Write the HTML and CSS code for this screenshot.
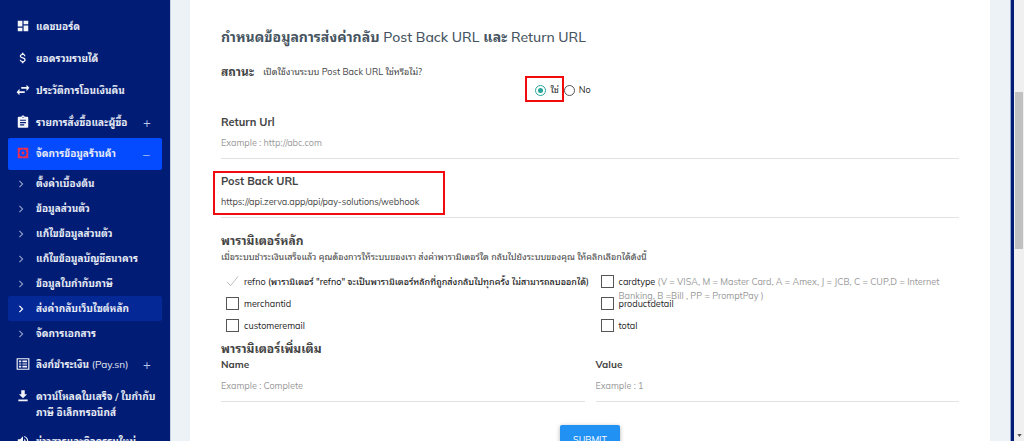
FILE: index.html
```html
<!DOCTYPE html>
<html lang="th">
<head>
<meta charset="utf-8">
<meta name="viewport" content="width=device-width, initial-scale=1">
<title>Post Back URL</title>
<link rel="stylesheet" href="styles.css">
</head>
<body>
<div class="app">
  <nav class="sidebar">
    <ul class="menu">
      <li><a class="item" href="#"><svg class="icon" viewBox="0 0 24 24"><path d="M3 13h8V3H3v10zm0 8h8v-6H3v6zm10 0h8V11h-8v10zm0-18v6h8V3h-8z"/></svg><span class="label">แดชบอร์ด</span></a></li>
      <li><a class="item" href="#"><svg class="icon" viewBox="0 0 24 24"><path d="M11.8 10.9c-2.27-.59-3-1.2-3-2.15 0-1.09 1.01-1.85 2.7-1.85 1.78 0 2.44.85 2.5 2.1h2.21c-.07-1.72-1.12-3.3-3.21-3.81V3h-3v2.16c-1.94.42-3.5 1.68-3.5 3.61 0 2.31 1.91 3.46 4.7 4.13 2.5.6 3 1.48 3 2.41 0 .69-.49 1.79-2.7 1.79-2.06 0-2.87-.92-2.98-2.1h-2.2c.12 2.19 1.76 3.42 3.68 3.83V21h3v-2.15c1.95-.37 3.5-1.5 3.5-3.55 0-2.84-2.43-3.81-4.7-4.4z"/></svg><span class="label">ยอดรวมรายได้</span></a></li>
      <li><a class="item" href="#"><svg class="icon" viewBox="0 0 24 24"><path d="M23 8l-5-5v4H9v3h9v4l5-6zM1 16l5 5v-4h9v-3H6v-4l-5 6z"/></svg><span class="label">ประวัติการโอนเงินคืน</span></a></li>
      <li><a class="item" href="#"><svg class="icon" viewBox="0 0 24 24"><path d="M19 3h-4.18C14.4 1.84 13.3 1 12 1c-1.3 0-2.4.84-2.82 2H5c-1.1 0-2 .9-2 2v15c0 1.1.9 2 2 2h14c1.1 0 2-.9 2-2V5c0-1.1-.9-2-2-2zm-7 0c.55 0 1 .45 1 1s-.45 1-1 1-1-.45-1-1 .45-1 1-1zm2 15H7v-2h7v2zm3-4H7v-2h10v2zm0-4H7V8h10v2z"/></svg><span class="label">รายการสั่งซื้อและผู้ซื้อ</span><span class="toggle">+</span></a></li>
      <li>
        <a class="item item-open" href="#"><svg class="icon icon-alert" viewBox="0 0 24 24"><path fill-rule="evenodd" d="M3 3h18v18H3zM12 5l2 2h3v3l2 2-2 2v3h-3l-2 2-2-2H7v-3l-2-2 2-2V7h3z"/><circle cx="12" cy="12" r="2.5"/></svg><span class="label">จัดการข้อมูลร้านค้า</span><span class="toggle">–</span></a>
        <ul class="submenu">
          <li><a class="sub" href="#"><svg class="chevron" viewBox="0 0 10 10"><path d="M3 1l4 4-4 4"/></svg>ตั้งค่าเบื้องต้น</a></li>
          <li><a class="sub" href="#"><svg class="chevron" viewBox="0 0 10 10"><path d="M3 1l4 4-4 4"/></svg>ข้อมูลส่วนตัว</a></li>
          <li><a class="sub" href="#"><svg class="chevron" viewBox="0 0 10 10"><path d="M3 1l4 4-4 4"/></svg>แก้ไขข้อมูลส่วนตัว</a></li>
          <li><a class="sub" href="#"><svg class="chevron" viewBox="0 0 10 10"><path d="M3 1l4 4-4 4"/></svg>แก้ไขข้อมูลบัญชีธนาคาร</a></li>
          <li><a class="sub" href="#"><svg class="chevron" viewBox="0 0 10 10"><path d="M3 1l4 4-4 4"/></svg>ข้อมูลใบกำกับภาษี</a></li>
          <li><a class="sub sub-active" href="#" aria-current="page"><svg class="chevron" viewBox="0 0 10 10"><path d="M3 1l4 4-4 4"/></svg>ส่งค่ากลับเว็บไซต์หลัก</a></li>
          <li><a class="sub" href="#"><svg class="chevron" viewBox="0 0 10 10"><path d="M3 1l4 4-4 4"/></svg>จัดการเอกสาร</a></li>
        </ul>
      </li>
      <li><a class="item" href="#"><svg class="icon" viewBox="0 0 24 24"><path fill-rule="evenodd" d="M1 2h22v20H1zM3 4v16h18V4zM5 6h4v3H5zm6 0h8v3h-8zm-6 5h4v2H5zm6 0h8v2h-8zm-6 4h4v3H5zm6 0h8v3h-8z"/></svg><span class="label">ลิงก์ชำระเงิน <span class="latin">(Pay.sn)</span></span><span class="toggle">+</span></a></li>
      <li><a class="item" href="#"><svg class="icon" viewBox="0 0 24 24"><path d="M19 9h-4V2H9v7H5l7 7 7-7zM4 18v3h16v-3H4z"/></svg><span class="label label-wide">ดาวน์โหลดใบเสร็จ / ใบกำกับภาษี อิเล็กทรอนิกส์</span></a></li>
      <li><a class="item item-last" href="#"><svg class="icon" viewBox="0 0 24 24"><path d="M3 9v6h4l5 5V4L7 9H3zm13.5 3c0-1.77-1.02-3.29-2.5-4.03v8.05c1.48-.73 2.5-2.25 2.5-4.02zM14 3.23v2.06c2.89.86 5 3.54 5 6.71s-2.11 5.85-5 6.71v2.06c4.01-.91 7-4.49 7-8.77s-2.99-7.86-7-8.77z"/></svg><span class="label">ข่าวสารและกิจกรรมใหม่</span></a></li>
    </ul>
  </nav>
  <main class="content">
    <form class="card">
      <h1 class="title">กำหนดข้อมูลการส่งค่ากลับ <span class="title-latin">Post Back URL</span> และ <span class="title-latin">Return URL</span></h1>
      <fieldset class="status">
        <legend class="status-legend"><span class="status-name">สถานะ</span><span>เปิดใช้งานระบบ Post Back URL ใช่หรือไม่?</span></legend>
        <div class="radios">
          <label class="radio marked marked-radio"><input type="radio" name="enabled" checked>ใช่</label>
          <label class="radio"><input type="radio" name="enabled">No</label>
        </div>
      </fieldset>
      <div class="field">
        <label class="field-label" for="return-url">Return Url</label>
        <input class="text" id="return-url" type="text" placeholder="Example : http://abc.com">
      </div>
      <div class="field marked marked-field">
        <label class="field-label" for="post-url">Post Back URL</label>
        <input class="text" id="post-url" type="text" value="https://api.zerva.app/api/pay-solutions/webhook">
      </div>
      <h2 class="section">พารามิเตอร์หลัก</h2>
      <p class="hint">เมื่อระบบชำระเงินเสร็จแล้ว คุณต้องการให้ระบบของเรา ส่งค่าพารามิเตอร์ใด กลับไปยังระบบของคุณ ให้คลิกเลือกได้ดังนี้</p>
      <div class="columns checks">
        <label class="check check-fixed"><input type="checkbox" checked disabled><svg class="tick" viewBox="0 0 14 12"><path d="M1 7l4 4 8-10"/></svg><span>refno <span class="strong">(พารามิเตอร์ "refno" จะเป็นพารามิเตอร์หลักที่ถูกส่งกลับไปทุกครั้ง ไม่สามารถลบออกได้)</span></span></label>
        <label class="check"><input type="checkbox"><span>cardtype <span class="note">(V = VISA, M = Master Card, A = Amex, J = JCB, C = CUP,D = Internet Banking, B =Bill , PP = PromptPay )</span></span></label>
        <label class="check"><input type="checkbox"><span>merchantid</span></label>
        <label class="check"><input type="checkbox"><span>productdetail</span></label>
        <label class="check"><input type="checkbox"><span>customeremail</span></label>
        <label class="check"><input type="checkbox"><span>total</span></label>
      </div>
      <h2 class="section">พารามิเตอร์เพิ่มเติม</h2>
      <div class="columns">
        <div>
          <label class="small-label" for="param-name">Name</label>
          <input class="text" id="param-name" type="text" placeholder="Example : Complete">
        </div>
        <div>
          <label class="small-label" for="param-value">Value</label>
          <input class="text" id="param-value" type="text" placeholder="Example : 1">
        </div>
      </div>
      <button class="submit" type="submit">SUBMIT</button>
    </form>
  </main>
  <div class="edge"></div>
  <div class="scrollbar" aria-hidden="true">
    <div class="thumb"></div>
    <svg class="arrow" viewBox="0 0 6 4"><path d="M0 0h6L3 4z"/></svg>
  </div>
</div>
</body>
</html>
```
FILE: styles.css
```css
*, *::before, *::after { box-sizing: border-box; }
body {
  margin: 0;
  font-family: Mulish, "Noto Sans Thai Looped", Waree, Loma, Garuda, "Noto Sans Thai", sans-serif;
  font-size: 9px;
  line-height: 14px;
  color: #444;
}
ul { list-style: none; margin: 0; padding: 0; }
a { color: inherit; text-decoration: none; }
.app { display: flex; height: 100vh; overflow: hidden; }

.sidebar {
  flex: 0 0 171px;
  padding: 11px 8px 0;
  background: #001c74;
  border-right: 1px solid #c5d0e8;
  color: #e6eaf5;
  font-size: 10px;
  font-weight: bold;
}
.item {
  display: flex;
  align-items: flex-start;
  padding: 8px;
  line-height: 16px;
  border-radius: 2px;
}
.item-open { margin-top: -1px; background: #044bff; }
.item-last { padding-top: 5px; }
.icon { flex: none; width: 14px; height: 14px; margin-right: 6px; fill: #f2f4fa; }
.icon-alert { fill: #e52f55; }
.label { flex: 1; white-space: nowrap; }
.label-wide { white-space: normal; margin-right: -8px; }
.latin { font-weight: normal; }
.toggle { width: 11px; font-size: 13px; font-weight: normal; color: #b8c6ec; }
.submenu { padding: 1px 0 3px; }
.sub { display: flex; align-items: center; height: 25px; padding-left: 9px; border-radius: 2px; }
.sub-active { background: #042896; }
.chevron { width: 8px; height: 8px; margin-right: 11px; fill: none; stroke: #8c9ac6; stroke-width: 1.5; }
.sub-active .chevron { stroke: #fff; }

.content { flex: 1; min-width: 0; padding: 0 20px 0 19px; background: #edf2f6; }
.card { min-height: 100%; padding: 27px 31px 0; background: #fff; }
.title { margin: 0 0 18px; font-size: 14px; line-height: 20px; color: #455460; }
.title-latin { font-weight: 500; }
.status { margin: 0; padding: 0; border: 0; }
.status-legend { display: flex; align-items: center; gap: 9px; padding: 0; line-height: 14px; }
.status-name { font-size: 12px; font-weight: bold; }
.radios { display: flex; justify-content: center; gap: 5px; margin: 4px 0 18px; padding-right: 54px; color: #222; }
.radio { display: flex; align-items: center; gap: 4px; }
.radio input {
  appearance: none;
  display: grid;
  place-items: center;
  width: 11px;
  height: 11px;
  margin: 0;
  border: 1px solid #555;
  border-radius: 50%;
}
.radio input:checked { border-color: #26a69a; }
.radio input:checked::before { content: ""; width: 5px; height: 5px; border-radius: 50%; background: #26a69a; }
.marked { position: relative; }
.marked::after { content: ""; position: absolute; border: 2px solid #f00c0c; pointer-events: none; }
.marked-radio::after { inset: -7px -5px -5px -10px; }
.marked-field::after { inset: -3px auto 3px -8px; width: 232px; }
.field { margin-bottom: 15px; }
.field-label { display: block; font-size: 11px; font-weight: bold; line-height: 14px; }
.text {
  display: block;
  width: 100%;
  height: 30px;
  padding: 0 0 2px;
  border: 0;
  border-bottom: 1px solid #e2e2e2;
  background: transparent;
  font: inherit;
  color: #444;
}
.text::placeholder { color: #999; opacity: 1; }
.section { margin: 0; font-size: 12px; line-height: 16px; }
.hint { margin: 0 0 10px; line-height: 16px; }
.columns { display: grid; grid-template-columns: repeat(2, minmax(0, 1fr)); column-gap: 11px; }
.checks { grid-auto-rows: 22px; color: #222; }
.check { display: flex; align-items: flex-start; gap: 5px; padding: 0 12px 0 5px; }
.check input { appearance: none; flex: none; width: 13px; height: 13px; margin: 0; border: 1px solid #555; }
.check-fixed { padding-right: 0; white-space: nowrap; }
.check-fixed input { display: none; }
.tick { flex: none; width: 13px; height: 12px; fill: none; stroke: #bbb; }
.strong { font-weight: 500; }
.note { color: #999; }
.small-label { display: block; font-size: 10px; font-weight: bold; line-height: 15px; }
.submit {
  display: block;
  width: 60px;
  height: 30px;
  margin: 23px auto 0;
  border: 0;
  border-radius: 2px;
  background: #2191f3;
  color: #fff;
  font: inherit;
  box-shadow: 0 1px 4px rgba(0, 0, 0, .3);
}
.edge { flex: 0 0 4px; background: #001c74; border-left: 1px solid #9aa9d0; }
.scrollbar { flex: 0 0 10px; display: flex; flex-direction: column; align-items: center; justify-content: space-between; padding: 92px 0 4px; background: #f0f0f0; }
.thumb { width: 8px; height: 157px; background: #c1c1c1; }
.arrow { width: 5px; height: 3px; fill: #555; }
```
